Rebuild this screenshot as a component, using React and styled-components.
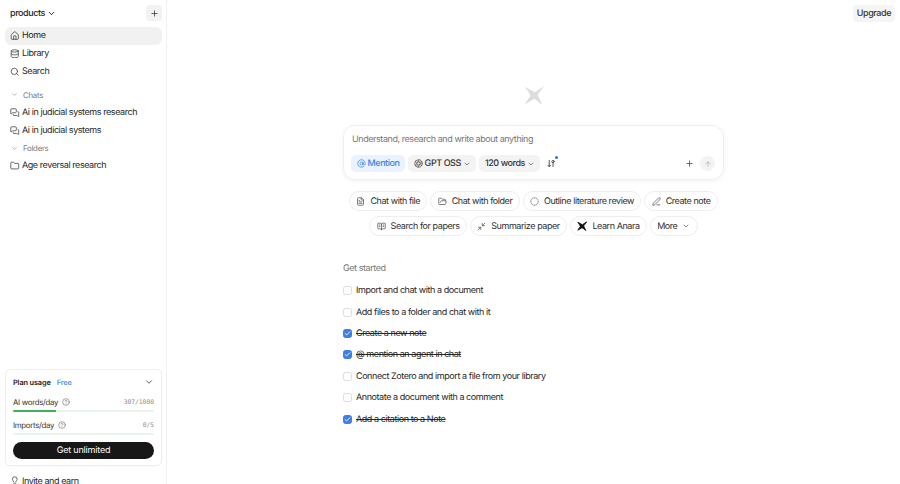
import React from "react";
import styled, { createGlobalStyle, css } from "styled-components";
import {
  Home, Database, Search, ChevronDown, Plus, MessagesSquare, Folder, CircleHelp, ArrowUp, AtSign,
  FileText, FolderOpen, CircleDashed, PenLine, BookOpenText, Minimize2, Lightbulb, Check, Aperture,
} from "lucide-react";

const Global = createGlobalStyle`
  html, body { margin: 0; padding: 0; height: 100%; background: #fff; overflow: hidden; }
  body { font-family: Inter, "Liberation Sans", sans-serif; color: #222; text-rendering: geometricPrecision; }
  #root { height: 484px; overflow: hidden; }
  * { box-sizing: border-box; }
`;

const tightText = css`
  font-size: 9px;
  letter-spacing: -0.43px;
  font-weight: 400;
`;

const Page = styled.div`
  display: flex;
  width: 900px;
  height: 484px;
  overflow: hidden;
`;

const Sidebar = styled.aside`
  width: 167px;
  flex: none;
  height: 484px;
  border-right: 1px solid #f1f1f1;
  padding: 5px 4px 0 5px;
  display: flex;
  flex-direction: column;
  overflow: hidden;
`;

const SideHeader = styled.div`
  display: flex;
  align-items: center;
  justify-content: space-between;
  height: 16px;
  padding-left: 5px;
  margin-bottom: 6px;
`;

const Workspace = styled.div`
  ${tightText}
  font-weight: 500;
  display: flex;
  align-items: center;
  gap: 2px;
  color: #222;
`;

const SquareButton = styled.div`
  width: 16px;
  height: 16px;
  border-radius: 4px;
  background: #f2f2f2;
  display: flex;
  align-items: center;
  justify-content: center;
  color: #333;
`;

const NavRow = styled.div`
  ${tightText}
  display: flex;
  align-items: center;
  gap: 2.5px;
  height: 18px;
  padding-left: 5px;
  padding-bottom: 1px;
  border-radius: 6px;
  color: #1f1f1f;
  white-space: nowrap;
  background: ${(p) => (p.$active ? "#f1f1f1" : "transparent")};
  svg { flex: none; color: #444; }
`;

const SectionRow = styled.div`
  display: flex;
  align-items: center;
  gap: 5px;
  height: ${(p) => p.$h || 18}px;
  padding-left: 6px;
  padding-bottom: 1px;
  margin-top: ${(p) => p.$mt || 0}px;
  font-size: 7.8px;
  letter-spacing: -0.25px;
  color: #777;
  svg { color: #888; }
`;

const Spacer = styled.div`
  flex: 1;
`;

const PlanCard = styled.div`
  height: 97px;
  flex: none;
  border: 1px solid #eeeeee;
  border-radius: 5px;
  padding: 6px 7px 0 7px;
  box-shadow: 0 1px 2px rgba(0, 0, 0, 0.03);
  display: flex;
  flex-direction: column;
`;

const PlanHead = styled.div`
  display: flex;
  align-items: center;
  height: 12px;
  font-size: 7.4px;
  font-weight: 600;
  letter-spacing: -0.15px;
  color: #222;
  margin-bottom: 8px;
  svg { margin-left: auto; color: #444; }
`;

const FreeTag = styled.span`
  color: #3f86e0;
  font-weight: 500;
  font-size: 7.4px;
  letter-spacing: -0.1px;
  margin-left: 6px;
`;

const UsageRow = styled.div`
  display: flex;
  align-items: center;
  gap: 4px;
  height: 12px;
  font-size: 7.8px;
  letter-spacing: -0.28px;
  color: #333;
  svg { color: #777; }
`;

const UsageCount = styled.span`
  margin-left: auto;
  font-family: "DejaVu Sans Mono", "Liberation Mono", monospace;
  font-size: 6.3px;
  letter-spacing: 0;
  color: #888;
`;

const Track = styled.div`
  height: 2px;
  border-radius: 1px;
  background: #e7f5ea;
  margin: 2px 0 7px;
  overflow: hidden;
`;

const Fill = styled.div`
  height: 100%;
  background: #3db25a;
`;

const GetUnlimited = styled.div`
  height: 17px;
  border-radius: 9px;
  background: #171717;
  color: #fff;
  font-size: 9px;
  letter-spacing: -0.2px;
  display: flex;
  align-items: center;
  justify-content: center;
`;

const InviteRow = styled(NavRow)`
  margin-top: 6px;
  margin-bottom: -6px;
  padding-bottom: 0;
  flex: none;
`;

const Main = styled.main`
  flex: 1;
  min-width: 0;
  display: flex;
  flex-direction: column;
  align-items: center;
  padding-top: 5px;
`;

const TopBar = styled.div`
  align-self: stretch;
  display: flex;
  justify-content: flex-end;
  padding-right: 5px;
  height: 17px;
`;

const Upgrade = styled.div`
  ${tightText}
  font-weight: 500;
  height: 17px;
  padding: 0 4px;
  border-radius: 4px;
  background: #f5f5f5;
  color: #333;
  display: flex;
  align-items: center;
`;

const LogoWrap = styled.div`
  width: 22px;
  height: 22px;
  margin-top: 62px;
  margin-bottom: 19px;
  color: #dddddd;
`;

const Composer = styled.div`
  width: 381px;
  height: 55px;
  border: 1px solid #efefef;
  border-radius: 12px;
  box-shadow: 0 1px 4px rgba(0, 0, 0, 0.06);
  padding: 8px 8px 0 8px;
  display: flex;
  flex-direction: column;
`;

const Placeholder = styled.div`
  ${tightText}
  color: #777;
  height: 12px;
  line-height: 12px;
  margin-bottom: 9px;
`;

const ToolRow = styled.div`
  display: flex;
  align-items: center;
  gap: 3px;
  height: 17px;
  margin-left: -1px;
`;

const Pill = styled.div`
  ${tightText}
  font-weight: 500;
  height: 17px;
  border-radius: 5px;
  display: flex;
  align-items: center;
  gap: 2px;
  padding: 0 5.5px;
  background: ${(p) => (p.$blue ? "#e9f2fd" : "#f3f3f3")};
  color: ${(p) => (p.$blue ? "#3f86e0" : "#333")};
  svg { color: ${(p) => (p.$blue ? "#3f86e0" : "#555")}; }
`;

const SortIcon = styled.div`
  width: 8px;
  height: 9px;
  margin-left: 4px;
  position: relative;
  color: #444;
  display: flex;
`;

const Dot = styled.span`
  position: absolute;
  top: -3px;
  right: -3px;
  width: 3px;
  height: 3px;
  border-radius: 50%;
  background: #2f74d0;
`;

const ToolEnd = styled.div`
  margin-left: auto;
  display: flex;
  align-items: center;
  gap: 6px;
  color: #444;
`;

const SendButton = styled.div`
  width: 15px;
  height: 15px;
  border-radius: 50%;
  background: #f3f3f3;
  color: #aaa;
  display: flex;
  align-items: center;
  justify-content: center;
`;

const ChipRow = styled.div`
  display: flex;
  justify-content: center;
  gap: 3px;
  margin-top: ${(p) => p.$mt}px;
`;

const Chip = styled.div`
  ${tightText}
  height: 20px;
  border: 1px solid #eeeeee;
  border-radius: 10px;
  padding: 0 6.3px;
  display: flex;
  align-items: center;
  gap: 5px;
  color: #2e2e2e;
  white-space: nowrap;
  svg { color: #555; flex: none; }
`;

const Started = styled.section`
  width: 381px;
  margin-top: 27px;
`;

const StartedTitle = styled.div`
  ${tightText}
  color: #777;
  height: 12px;
  line-height: 12px;
  margin-bottom: 5px;
`;

const Task = styled.div`
  ${tightText}
  display: flex;
  align-items: center;
  gap: 4px;
  height: 21.4px;
  color: #262626;
  text-decoration: ${(p) => (p.$done ? "line-through" : "none")};
`;

const Box = styled.span`
  width: 9px;
  height: 9px;
  border-radius: 2.5px;
  flex: none;
  display: flex;
  align-items: center;
  justify-content: center;
  border: 1px solid ${(p) => (p.$done ? "#3f7fe0" : "#dddddd")};
  background: ${(p) => (p.$done ? "#3f7fe0" : "#fff")};
  color: #fff;
`;

const AnaraMark = ({ size = 22, color = "currentColor", weight = 0 }) => (
  <svg width={size} height={size} viewBox="0 0 24 24" fill={color} stroke={color} strokeWidth={weight} strokeLinejoin="round">
    <path d="M2 3 C8 6 11 8 13 9 C16 7 19 5 23 2 C20 7 17 10 16 12 C17 15 20 19 21 23 C18 20 14 17 12 16 C9 18 6 20 2 22 C4 18 7 15 8 13 C7 9 4 6 2 3 Z" />
  </svg>
);

const SortGlyph = () => (
  <svg width="8" height="9" viewBox="0 0 9 10" fill="none" stroke="currentColor" strokeWidth="1" strokeLinecap="round" strokeLinejoin="round">
    <path d="M2.5 1.5 V8.5 M1 7 L2.5 8.5 L4 7" />
    <circle cx="6.8" cy="2.8" r="1.3" />
    <path d="M6.8 4.2 V8.5" />
  </svg>
);

const tasks = [
  ["Import and chat with a document", false],
  ["Add files to a folder and chat with it", false],
  ["Create a new note", true],
  ["@ mention an agent in chat", true],
  ["Connect Zotero and import a file from your library", false],
  ["Annotate a document with a comment", false],
  ["Add a citation to a Note", true],
];

export default function App() {
  return (
    <Page>
      <Global />
      <Sidebar>
        <SideHeader>
          <Workspace>products <ChevronDown size={9} strokeWidth={2.5} /></Workspace>
          <SquareButton><Plus size={9} strokeWidth={2} /></SquareButton>
        </SideHeader>
        <NavRow $active><Home size={9.5} />Home</NavRow>
        <NavRow><Database size={9.5} />Library</NavRow>
        <NavRow><Search size={9.5} />Search</NavRow>
        <SectionRow $mt={5}><ChevronDown size={7} />Chats</SectionRow>
        <NavRow><MessagesSquare size={9.5} />Ai in judicial systems research</NavRow>
        <NavRow><MessagesSquare size={9.5} />Ai in judicial systems</NavRow>
        <SectionRow $h={17}><ChevronDown size={7} />Folders</SectionRow>
        <NavRow><Folder size={9.5} />Age reversal research</NavRow>
        <Spacer />
        <PlanCard>
          <PlanHead>Plan usage<FreeTag>Free</FreeTag><ChevronDown size={10} /></PlanHead>
          <UsageRow>AI words/day <CircleHelp size={8} /><UsageCount>307/1000</UsageCount></UsageRow>
          <Track><Fill style={{ width: "30.7%" }} /></Track>
          <UsageRow>Imports/day <CircleHelp size={8} /><UsageCount>0/5</UsageCount></UsageRow>
          <Track><Fill style={{ width: "0%" }} /></Track>
          <GetUnlimited>Get unlimited</GetUnlimited>
        </PlanCard>
        <InviteRow><Lightbulb size={9.5} />Invite and earn</InviteRow>
      </Sidebar>
      <Main>
        <TopBar><Upgrade>Upgrade</Upgrade></TopBar>
        <LogoWrap><AnaraMark /></LogoWrap>
        <Composer>
          <Placeholder>Understand, research and write about anything</Placeholder>
          <ToolRow>
            <Pill $blue><AtSign size={9} />Mention</Pill>
            <Pill><Aperture size={9} />GPT OSS <ChevronDown size={8} /></Pill>
            <Pill>120 words <ChevronDown size={8} /></Pill>
            <SortIcon><SortGlyph /><Dot /></SortIcon>
            <ToolEnd><Plus size={9} /><SendButton><ArrowUp size={8} /></SendButton></ToolEnd>
          </ToolRow>
        </Composer>
        <ChipRow $mt={11}>
          <Chip><FileText size={9} />Chat with file</Chip>
          <Chip><FolderOpen size={9} />Chat with folder</Chip>
          <Chip><CircleDashed size={9} />Outline literature review</Chip>
          <Chip><PenLine size={9} />Create note</Chip>
        </ChipRow>
        <ChipRow $mt={5}>
          <Chip><BookOpenText size={9} />Search for papers</Chip>
          <Chip><Minimize2 size={9} />Summarize paper</Chip>
          <Chip><AnaraMark size={10} color="#111" weight={2} />Learn Anara</Chip>
          <Chip>More <ChevronDown size={8} /></Chip>
        </ChipRow>
        <Started>
          <StartedTitle>Get started</StartedTitle>
          {tasks.map(([label, done]) => (
            <Task key={label} $done={done}>
              <Box $done={done}>{done && <Check size={7} strokeWidth={3} />}</Box>
              {label}
            </Task>
          ))}
        </Started>
      </Main>
    </Page>
  );
}
